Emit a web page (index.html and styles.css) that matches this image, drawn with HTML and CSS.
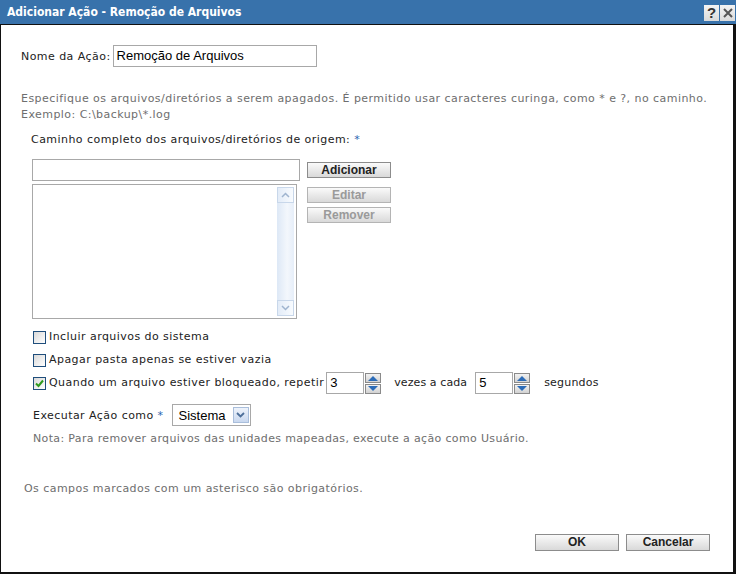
FILE: index.html
```html
<!DOCTYPE html>
<html lang="pt">
<head>
<meta charset="utf-8">
<title>Adicionar Ação - Remoção de Arquivos</title>
<link rel="stylesheet" href="styles.css">
</head>
<body>
<div class="dialog">
  <div class="titlebar">
    <span class="title">Adicionar Ação - Remoção de Arquivos</span>
    <div class="tbtns">
      <span class="tbtn">?</span>
      <span class="tbtn"><svg width="12" height="12" viewBox="0 0 12 12"><path d="M2 2L10 10M10 2L2 10" stroke="#555" stroke-width="2"/></svg></span>
    </div>
  </div>
  <div class="content">
    <div class="name-row">
      <span class="label">Nome da Ação:</span>
      <div class="field name-field">Remoção de Arquivos</div>
    </div>
    <p class="desc">Especifique os arquivos/diretórios a serem apagados. É permitido usar caracteres curinga, como * e ?, no caminho.<br>Exemplo: C:\backup\*.log</p>
    <div class="label path-label">Caminho completo dos arquivos/diretórios de origem: <span class="req">*</span></div>
    <div class="paths">
      <div class="paths-left">
        <div class="field path-field"></div>
        <div class="listbox">
          <div class="scrollbar">
            <div class="sb-btn"><svg width="9" height="6" viewBox="0 0 9 6"><path d="M1 5L4.5 1.5L8 5" fill="none" stroke="#9fb4cf" stroke-width="1.5"/></svg></div>
            <div class="sb-track"></div>
            <div class="sb-btn"><svg width="9" height="6" viewBox="0 0 9 6"><path d="M1 1L4.5 4.5L8 1" fill="none" stroke="#9fb4cf" stroke-width="1.5"/></svg></div>
          </div>
        </div>
      </div>
      <div class="paths-btns">
        <div class="btn">Adicionar</div>
        <div class="btn btn-gap disabled">Editar</div>
        <div class="btn disabled">Remover</div>
      </div>
    </div>
    <div class="check-row r1"><span class="cbox"></span><span class="label">Incluir arquivos do sistema</span></div>
    <div class="check-row r2"><span class="cbox"></span><span class="label">Apagar pasta apenas se estiver vazia</span></div>
    <div class="check-row r3">
      <span class="cbox checked"><svg width="11" height="11" viewBox="0 0 11 11"><path d="M2 5.5L4.5 8L9 2.5" fill="none" stroke="#2f9a1e" stroke-width="2"/></svg></span>
      <span class="label">Quando um arquivo estiver bloqueado, repetir</span>
      <div class="field num-field n1">3</div>
      <div class="spin">
        <div class="spin-half"><svg width="12" height="6" viewBox="0 0 12 6"><path d="M1 6L6 1L11 6Z" fill="#2c6cb8"/></svg></div>
        <div class="spin-half"><svg width="12" height="6" viewBox="0 0 12 6"><path d="M1 0L6 5L11 0Z" fill="#2c6cb8"/></svg></div>
      </div>
      <span class="label times">vezes a cada</span>
      <div class="field num-field n2">5</div>
      <div class="spin">
        <div class="spin-half"><svg width="12" height="6" viewBox="0 0 12 6"><path d="M1 6L6 1L11 6Z" fill="#2c6cb8"/></svg></div>
        <div class="spin-half"><svg width="12" height="6" viewBox="0 0 12 6"><path d="M1 0L6 5L11 0Z" fill="#2c6cb8"/></svg></div>
      </div>
      <span class="label secs">segundos</span>
    </div>
    <div class="run-row">
      <span class="label">Executar Ação como <span class="req">*</span></span>
      <div class="select"><span class="sel-text">Sistema</span><span class="sel-arrow"><svg width="9" height="6" viewBox="0 0 9 6"><path d="M1 1L4.5 4.5L8 1" fill="none" stroke="#4d6f9a" stroke-width="1.8"/></svg></span></div>
    </div>
    <p class="note">Nota: Para remover arquivos das unidades mapeadas, execute a ação como Usuário.</p>
    <p class="required-note">Os campos marcados com um asterisco são obrigatórios.</p>
    <div class="footer">
      <div class="btn">OK</div>
      <div class="btn">Cancelar</div>
    </div>
  </div>
</div>
</body>
</html>
```
FILE: styles.css
```css
html, body {
  margin: 0;
  padding: 0;
  background: #ffffff;
}
body {
  font-family: "DejaVu Sans", Verdana, sans-serif;
  font-size: 11px;
  letter-spacing: 0.45px;
  color: #222222;
}
.dialog {
  width: 736px;
  height: 574px;
  box-sizing: border-box;
  display: flex;
  flex-direction: column;
}
.titlebar {
  height: 24px;
  background: #3872ab;
  border-bottom: 1px solid #111;
  display: flex;
  align-items: center;
  justify-content: space-between;
  padding-left: 7px;
  flex: none;
}
.title {
  font-family: "DejaVu Sans Condensed", "DejaVu Sans", sans-serif;
  font-stretch: condensed;
  font-weight: bold;
  font-size: 12px;
  letter-spacing: 0;
  color: #ffffff;
}
.tbtns {
  display: flex;
  gap: 1px;
  padding-right: 1px;
  padding-top: 1px;
}
.tbtn {
  width: 15px;
  height: 16px;
  background: linear-gradient(#f4f4f4, #dadada);
  display: flex;
  align-items: center;
  justify-content: center;
  font-family: "Liberation Sans", Arial, sans-serif;
  font-weight: bold;
  font-size: 15px;
  letter-spacing: 0;
  color: #333;
}
.content {
  flex: 1;
  border-left: 1px solid #111;
  border-right: 3px solid #111;
  border-bottom: 2px solid #111;
  padding: 20px 0 0 20px;
}
.label {
  color: #222;
}
.req {
  color: #2a66b0;
}
.field {
  box-sizing: border-box;
  border: 1px solid #a8a8a8;
  background: #fff;
  font-family: "Liberation Sans", Arial, sans-serif;
  font-size: 13px;
  letter-spacing: 0;
  color: #000;
  height: 22px;
  line-height: 20px;
  padding-left: 3px;
}
.name-row {
  display: flex;
  align-items: center;
  gap: 2px;
}
.name-field {
  width: 204px;
}
.desc {
  margin: 24px 0 0 0;
  line-height: 16px;
  color: #6e6e6e;
}
.path-label {
  margin-top: 9px;
  line-height: 16px;
  margin-left: 10px;
}
.paths {
  display: flex;
  margin-top: 11px;
  margin-left: 11px;
  gap: 7px;
}
.paths-left {
  display: flex;
  flex-direction: column;
  gap: 3px;
}
.path-field {
  width: 268px;
}
.listbox {
  width: 265px;
  height: 135px;
  box-sizing: border-box;
  border: 1px solid #a8a8a8;
  display: flex;
  justify-content: flex-end;
  padding: 2px;
}
.scrollbar {
  width: 17px;
  display: flex;
  flex-direction: column;
  background: linear-gradient(to right, #dde8f6, #f3f7fc 60%, #e6eef9);
}
.sb-track {
  flex: 1;
}
.sb-btn {
  height: 16px;
  box-sizing: border-box;
  border: 1px solid #c8d7ea;
  background: linear-gradient(to right, #e3ecf8, #f8fbfe);
  display: flex;
  align-items: center;
  justify-content: center;
}
.paths-btns {
  display: flex;
  flex-direction: column;
  padding-top: 3px;
}
.btn {
  box-sizing: border-box;
  width: 84px;
  height: 16px;
  border: 1px solid #8c8c8c;
  background: linear-gradient(#fafafa, #d9d9d9);
  font-family: "Liberation Sans", Arial, sans-serif;
  font-weight: bold;
  font-size: 12px;
  letter-spacing: 0;
  line-height: 14px;
  text-align: center;
  color: #222;
}
.btn.disabled {
  color: #9a9a9a;
  border-color: #b4b4b4;
}
.btn-gap {
  margin-top: 9px;
  margin-bottom: 4px;
}
.check-row {
  display: flex;
  align-items: center;
  margin-left: 12px;
}
.r1 { margin-top: 10px; }
.r2 { margin-top: 7px; }
.r3 { margin-top: 4px; }
.cbox {
  width: 13px;
  height: 13px;
  box-sizing: border-box;
  border: 1px solid #1f4e7c;
  background: linear-gradient(135deg, #d9d9d9, #ffffff);
  margin-right: 3px;
  display: flex;
  align-items: center;
  justify-content: center;
  flex: none;
}
.check-row .label {
  line-height: 16px;
}
.num-field {
  width: 38px;
  height: 22px;
  margin-left: 2px;
}
.spin {
  display: flex;
  flex-direction: column;
  gap: 1px;
  margin-left: 1px;
}
.spin-half {
  width: 16px;
  height: 10px;
  box-sizing: border-box;
  border: 1px solid #8a8a8a;
  background: linear-gradient(#f2f2f2, #d2d2d2);
  display: flex;
  align-items: center;
  justify-content: center;
}
.times { margin-left: 13px; margin-right: 8px; letter-spacing: 0.1px; }
.n2 { margin-left: 0; }
.secs { margin-left: 14px; letter-spacing: 0.2px; }
.run-row {
  display: flex;
  align-items: center;
  margin-top: 10px;
  margin-left: 12px;
  gap: 8px;
}
.select {
  width: 79px;
  height: 22px;
  box-sizing: border-box;
  border: 1px solid #a8a8a8;
  display: flex;
  align-items: center;
  justify-content: space-between;
  padding: 0 1px 0 6px;
  font-family: "Liberation Sans", Arial, sans-serif;
  font-size: 13px;
  letter-spacing: 0;
  color: #000;
}
.sel-arrow {
  width: 16px;
  height: 16px;
  box-sizing: border-box;
  border: 1px solid #a9bedb;
  background: linear-gradient(#eef3fb, #c9d8ef);
  display: flex;
  align-items: center;
  justify-content: center;
}
.note {
  margin: 5px 0 0 12px;
  line-height: 16px;
  letter-spacing: 0.35px;
  color: #6e6e6e;
}
.required-note {
  margin: 34px 0 0 3px;
  line-height: 16px;
  color: #6e6e6e;
}
.footer {
  display: flex;
  justify-content: flex-end;
  gap: 7px;
  margin-top: 37px;
  margin-right: 23px;
}
.footer .btn {
  height: 17px;
}
```
